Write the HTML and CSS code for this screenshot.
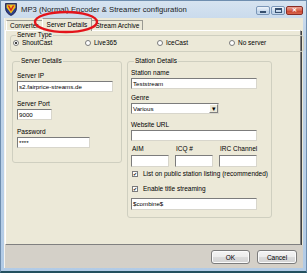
FILE: index.html
```html
<!DOCTYPE html>
<html lang="en">
<head>
    <meta charset="UTF-8">
    <meta name="viewport" content="width=device-width, initial-scale=1.0">
    <title>MP3 (Normal) Encoder &amp; Streamer configuration</title>
    <link rel="stylesheet" href="styles.css">
</head>
<body>
    <div class="window">
        <div class="titlebar">
            <svg class="app-icon" viewBox="0 0 12 13">
                <path d="M0.5 0.5 H11.5 V5 C11.5 9 8.5 11.5 6 12.5 C3.5 11.5 0.5 9 0.5 5 Z" fill="#2b3f8c" stroke="#1a1a40" stroke-width="0.8"/>
                <path d="M1.6 1.6 H10.4 V4.5 L6 10.5 L1.6 4.5 Z" fill="#f2c21b"/>
                <path d="M2.6 2.4 L6 8.6 L9.4 2.4 H7.8 L6 5.8 L4.2 2.4 Z" fill="#d2261c"/>
            </svg>
            <span class="title">MP3 (Normal) Encoder &amp; Streamer configuration</span>
            <div class="caption-btns">
                <span class="cap-btn"><span class="glyph-min"></span></span>
                <span class="cap-btn"><span class="glyph-max"></span></span>
                <span class="cap-btn close"><span class="glyph-close">✕</span></span>
            </div>
        </div>

        <div class="client">
            <div class="tabs">
                <span class="tab">Converter</span>
                <span class="tab active">Server Details</span>
                <span class="tab">Stream Archive</span>
            </div>

            <div class="panel">
                <fieldset class="group server-type">
                    <legend>Server Type</legend>
                    <div class="radio-row">
                        <label class="radio"><span class="dot checked"></span>ShoutCast</label>
                        <label class="radio"><span class="dot"></span>Live365</label>
                        <label class="radio"><span class="dot"></span>IceCast</label>
                        <label class="radio"><span class="dot"></span>No server</label>
                    </div>
                </fieldset>

                <div class="columns">
                    <fieldset class="group server-details">
                        <legend>Server Details</legend>
                        <div class="field">
                            <span class="label">Server IP</span>
                            <span class="input w-ip">s2.fairprice-streams.de</span>
                        </div>
                        <div class="field">
                            <span class="label">Server Port</span>
                            <span class="input w-port">9000</span>
                        </div>
                        <div class="field">
                            <span class="label">Password</span>
                            <span class="input w-pass">****</span>
                        </div>
                    </fieldset>

                    <fieldset class="group station-details">
                        <legend>Station Details</legend>
                        <div class="field">
                            <span class="label">Station name</span>
                            <span class="input w-full">Teststream</span>
                        </div>
                        <div class="field">
                            <span class="label">Genre</span>
                            <span class="input combo">Various<span class="drop">▾</span></span>
                        </div>
                        <div class="field">
                            <span class="label">Website URL</span>
                            <span class="input w-full"></span>
                        </div>
                        <div class="triple">
                            <span class="label">AIM</span>
                            <span class="label">ICQ #</span>
                            <span class="label">IRC Channel</span>
                            <span class="input"></span>
                            <span class="input"></span>
                            <span class="input"></span>
                        </div>
                        <label class="check first"><span class="box">✔</span>List on public station listing (recommended)</label>
                        <label class="check"><span class="box">✔</span>Enable title streaming</label>
                        <span class="input w-full combine">$combine$</span>
                    </fieldset>
                </div>
            </div>

            <div class="footer">
                <button class="btn">OK</button>
                <button class="btn">Cancel</button>
            </div>
        </div>

        <svg class="highlight" viewBox="0 0 66 24">
            <ellipse cx="33" cy="12" rx="31" ry="10" fill="none" stroke="#e3141b" stroke-width="2.4"/>
        </svg>
    </div>
</body>
</html>
```

FILE: styles.css
```css
* {
    margin: 0;
    padding: 0;
    box-sizing: border-box;
}

body {
    font-family: "Liberation Sans", Arial, sans-serif;
    font-size: 6.5px;
    color: #000;
    background: #fff;
}

.window {
    position: relative;
    width: 307px;
    height: 273px;
    display: flex;
    flex-direction: column;
    background: linear-gradient(180deg, #d6e3f0 0%, #c3d6ea 10%, #b2cbe6 100%);
    border: 1px solid #6f8eaf;
    border-bottom: 2px solid #23505f;
    padding: 0 3px 3px 3px;
}

/* title bar */
.titlebar {
    height: 17px;
    display: flex;
    align-items: center;
    padding-left: 1px;
}

.app-icon {
    width: 12px;
    height: 13px;
    margin-right: 4px;
}

.title {
    font-size: 7.7px;
    color: #1b1b1b;
    white-space: nowrap;
}

.caption-btns {
    margin-left: auto;
    display: flex;
    gap: 1px;
    margin-top: 1px;
}

.cap-btn {
    width: 14px;
    height: 9px;
    border: 1px solid #7b97b8;
    border-radius: 2px;
    background: linear-gradient(180deg, #eef4fb 0%, #cfdeee 50%, #b8cde4 51%, #c9dbee 100%);
    display: flex;
    align-items: center;
    justify-content: center;
}

.cap-btn.close {
    width: 17px;
    border-color: #8a2c24;
    background: linear-gradient(180deg, #eaa394 0%, #d8634e 50%, #c7402a 51%, #d9684f 100%);
}

.glyph-min {
    width: 6px;
    height: 2px;
    background: #37506f;
    margin-top: 3px;
}

.glyph-max {
    width: 7px;
    height: 5px;
    border: 1px solid #37506f;
    border-top-width: 2px;
}

.glyph-close {
    color: #fff;
    font-size: 6px;
    font-weight: bold;
    line-height: 1;
}

/* client area */
.client {
    flex: 1;
    background: #ece9d8;
    display: flex;
    flex-direction: column;
    border-left: 1px solid #f4f3ee;
}

.tabs {
    height: 12px;
    display: flex;
    align-items: flex-end;
    padding-left: 1px;
    position: relative;
    z-index: 1;
}

.tab {
    height: 10px;
    line-height: 9px;
    padding: 0 3px;
    border: 1px solid #9a9a92;
    border-bottom: none;
    border-left-color: #fff;
    background: #ece9d8;
    white-space: nowrap;
}

.tab.active {
    height: 13px;
    line-height: 11px;
    margin: 0 -1px -1px -1px;
    padding: 0 4px;
    position: relative;
    z-index: 2;
}

.panel {
    flex: 1;
    margin: 0 2px 0 0;
    border: 1px solid;
    border-color: #fff #808080 #808080 #fff;
    box-shadow: 1px 1px 0 #404040;
    background: #ece9d8;
}

/* group boxes */
.group {
    border: 1px solid #cfcfc0;
    border-radius: 3px;
}

.group legend {
    line-height: 8px;
    padding: 0 1px;
    margin-left: 3px;
}

.server-type {
    margin: 0 2px 0 4px;
    padding: 0 2px 4px 2px;
}

.radio-row {
    display: grid;
    grid-template-columns: repeat(4, 72px);
    height: 8px;
    line-height: 8px;
}

.radio {
    display: flex;
    align-items: center;
}

.dot {
    width: 6px;
    height: 6px;
    border-radius: 50%;
    border: 1px solid #7a7a7a;
    background: #fff;
    margin-right: 3px;
    display: flex;
    align-items: center;
    justify-content: center;
}

.dot.checked::after {
    content: '';
    width: 2px;
    height: 2px;
    border-radius: 50%;
    background: #000;
}

.columns {
    display: flex;
    align-items: flex-start;
    gap: 5px;
    margin-top: 5px;
    padding-left: 6px;
}

.server-details {
    width: 110px;
    padding: 7px 4px 14px 4px;
}

.station-details {
    width: 145px;
    padding: 4px 3px 7px 3px;
}

.field {
    display: flex;
    flex-direction: column;
    align-items: flex-start;
}

.server-details .field + .field {
    margin-top: 8px;
}

.label {
    line-height: 8px;
    white-space: nowrap;
}

.input {
    display: block;
    height: 11px;
    margin-top: 1px;
    line-height: 9px;
    padding-left: 1px;
    background: #fff;
    border: 1px solid;
    border-color: #7c7c7c #d8d6cc #d8d6cc #7c7c7c;
    font-size: 6.2px;
    white-space: nowrap;
    overflow: hidden;
}

.w-ip { width: 96px; }
.w-port { width: 35px; }
.w-pass { width: 73px; }
.w-full { width: 126px; }

.station-details .field + .field {
    margin-top: 5px;
}

.station-details .field:nth-of-type(3) {
    margin-top: 7px;
}

.combo {
    width: 88px;
    position: relative;
}

.drop {
    position: absolute;
    right: 0;
    top: 0;
    width: 9px;
    height: 9px;
    background: #ece9d8;
    border: 1px solid;
    border-color: #fff #808080 #808080 #fff;
    font-size: 7px;
    line-height: 7px;
    text-align: center;
}

.triple {
    display: grid;
    grid-template-columns: repeat(3, 38px);
    column-gap: 6px;
    margin-top: 4px;
}

.triple .label {
    padding-left: 1px;
}

.triple .input {
    height: 12px;
    margin-top: 2px;
}

.check {
    display: flex;
    align-items: center;
    line-height: 8px;
    padding-left: 1px;
    margin-top: 7px;
    white-space: nowrap;
}

.check.first {
    margin-top: 3px;
}

.box {
    width: 6px;
    height: 6px;
    border: 1px solid #7a7a7a;
    background: #fff;
    margin-right: 5px;
    font-size: 5px;
    line-height: 4px;
    text-align: center;
    color: #111;
}

.combine {
    margin-top: 5px;
    height: 12px;
    line-height: 10px;
}

/* footer */
.footer {
    height: 23px;
    background: #d4d0c8;
    display: flex;
    justify-content: flex-end;
    align-items: flex-start;
    gap: 7px;
    padding: 5px 6px 0 0;
}

.btn {
    height: 14px;
    width: 39px;
    font-family: inherit;
    font-size: 6.5px;
    color: #000;
    border: 1px solid #7c7c7c;
    border-radius: 3px;
    background: linear-gradient(180deg, #f4f4f4 0%, #ececec 48%, #dcdcdc 52%, #d2d2d2 100%);
    box-shadow: inset 0 0 0 1px #fbfbfb;
}

.btn + .btn {
    width: 40px;
}

/* red annotation ring */
.highlight {
    position: absolute;
    z-index: 5;
    left: 32px;
    top: 9px;
    width: 66px;
    height: 24px;
}
```
